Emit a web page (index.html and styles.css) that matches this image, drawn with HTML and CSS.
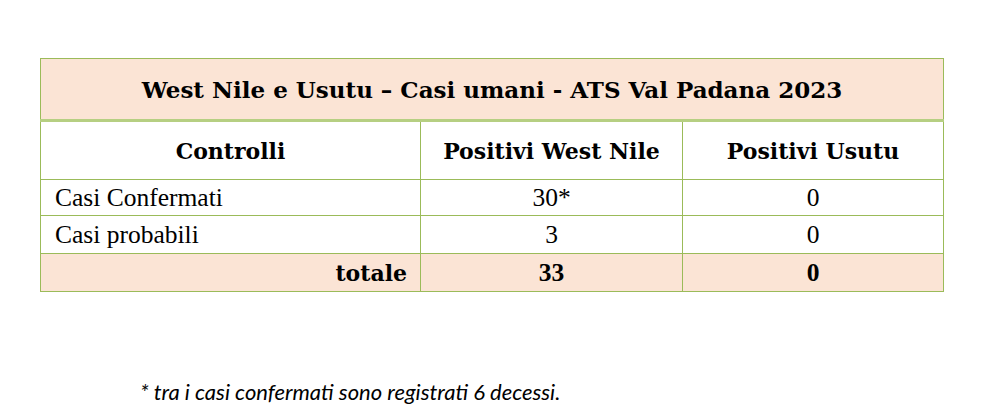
FILE: index.html
```html
<!DOCTYPE html>
<html lang="it">
<head>
<meta charset="utf-8">
<link rel="stylesheet" href="styles.css">
</head>
<body>
<div class="page">
  <table class="cases">
    <colgroup>
      <col class="c1"><col class="c2"><col class="c3">
    </colgroup>
    <tr class="title-row">
      <th colspan="3">West Nile e Usutu – Casi umani - ATS Val Padana 2023</th>
    </tr>
    <tr class="head-row">
      <th>Controlli</th>
      <th>Positivi West Nile</th>
      <th>Positivi Usutu</th>
    </tr>
    <tr class="data-row">
      <td class="label">Casi Confermati</td>
      <td>30*</td>
      <td>0</td>
    </tr>
    <tr class="data-row">
      <td class="label">Casi probabili</td>
      <td>3</td>
      <td>0</td>
    </tr>
    <tr class="total-row">
      <td class="label-total">totale</td>
      <td>33</td>
      <td>0</td>
    </tr>
  </table>
  <p class="note">* tra i casi confermati sono registrati 6 decessi.</p>
</div>
</body>
</html>
```
FILE: styles.css
```css
html, body {
  margin: 0;
  padding: 0;
  background: #ffffff;
}
.page {
  padding: 58px 0 0 40px;
}
.cases {
  border-collapse: collapse;
  width: 903px;
  table-layout: fixed;
  font-family: "Liberation Serif", "Times New Roman", serif;
  color: #000;
}
.c1 { width: 380px; }
.c2 { width: 262px; }
.c3 { width: 261px; }
.cases th, .cases td {
  border: 1px solid #9bbb59;
  padding: 0;
  text-align: center;
}
.title-row th {
  height: 60px;
  background: #fbe4d5;
  font-family: "DejaVu Serif", serif;
  font-size: 23px;
  font-weight: bold;
  border-bottom: 3px solid #b6cf82;
}
.head-row th {
  height: 57px;
  font-family: "DejaVu Serif", serif;
  font-size: 22px;
  font-weight: bold;
}
.data-row td {
  height: 35px;
  font-size: 25.5px;
}
.data-row + .data-row td {
  height: 37px;
}
.data-row td.label {
  text-align: left;
  padding-left: 14px;
}
.total-row td {
  height: 37px;
  background: #fbe4d5;
  font-size: 25.5px;
  font-weight: bold;
}
.total-row td.label-total {
  text-align: right;
  padding-right: 13px;
  font-family: "DejaVu Serif", serif;
  font-size: 22px;
}
.note {
  margin: 86px 0 0 100px;
  font-family: Lato, "Open Sans", sans-serif;
  font-style: italic;
  font-size: 22px;
  color: #000;
}
```
